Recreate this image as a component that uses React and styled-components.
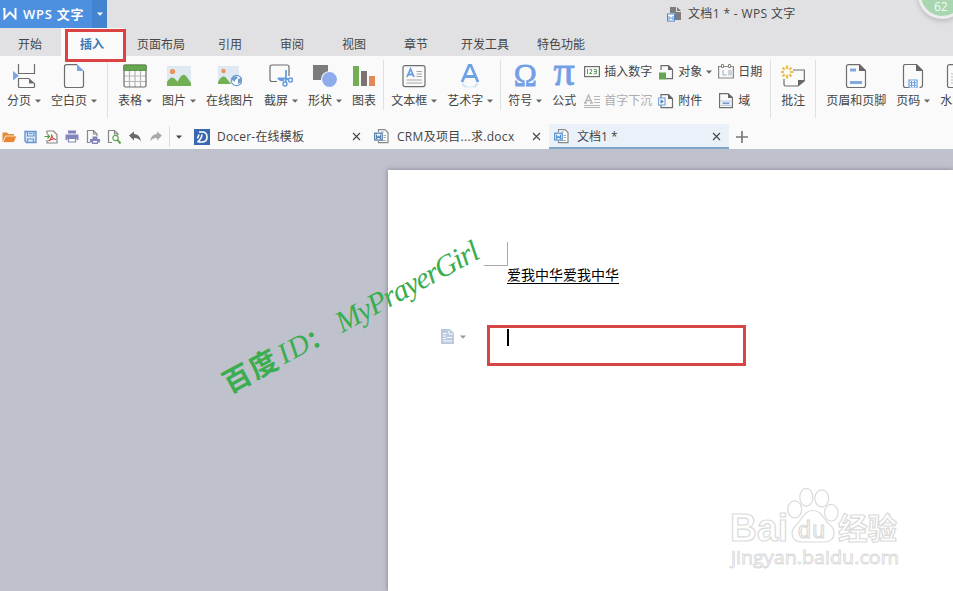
import styled, { createGlobalStyle } from "styled-components";

const GlobalStyle = createGlobalStyle`
  body {
    margin: 0;
    overflow: hidden;
  }
  svg {
    display: block;
    flex: none;
  }
`;

const Window = styled.div`
  position: relative;
  width: 953px;
  height: 591px;
  overflow: hidden;
  display: flex;
  flex-direction: column;
  background: #bfc2cc;
  font-family: "Open Sans", "Noto Sans CJK SC", sans-serif;
  font-size: 12px;
  line-height: 16px;
  color: #454545;
  white-space: nowrap;
`;

const TitleBar = styled.div`
  height: 28px;
  flex: none;
  display: flex;
  background: #e1e1e3;
`;

const Brand = styled.div`
  width: 92px;
  display: flex;
  align-items: center;
  gap: 6px;
  padding-left: 3px;
  box-sizing: border-box;
  background: #4c90df;
  color: #fff;
  font-size: 13px;
  font-weight: 600;
  letter-spacing: 0.75px;
`;

const BrandMenu = styled.div`
  width: 15px;
  display: flex;
  align-items: center;
  justify-content: center;
  background: #4384d0;
`;

const WindowTitle = styled.div`
  display: flex;
  align-items: center;
  gap: 6px;
  margin-left: 560px;
  letter-spacing: 0.35px;
`;

const Tabs = styled.div`
  height: 28px;
  flex: none;
  display: flex;
  background: #e1e1e3;
  padding-right: 20px;
`;

const Tab = styled.div`
  width: ${(props) => (props.$wide ? 76 : 62)}px;
  display: flex;
  align-items: center;
  justify-content: center;
  padding-top: 6px;
  box-sizing: border-box;
  background: ${(props) => (props.$active ? "#fafafa" : "transparent")};
  color: ${(props) => (props.$active ? "#4079b5" : "#454545")};
  font-weight: ${(props) => (props.$active ? 700 : 400)};

  &:first-child {
    margin-left: -1px;
  }
`;

const Ribbon = styled.div`
  height: 68px;
  flex: none;
  display: flex;
  background: #fafafa;
  padding-left: 2px;
  box-sizing: border-box;
`;

const ToolButton = styled.div`
  flex: none;
  display: flex;
  flex-direction: column;
  align-items: center;
  gap: 5px;
  padding: 8px 5px 0;
`;

const ToolLabel = styled.div`
  display: flex;
  align-items: center;
  gap: 4px;
`;

const Separator = styled.div`
  flex: none;
  width: 1px;
  height: ${(props) => (props.$tall ? 58 : 50)}px;
  margin: 4px ${(props) => (props.$tall ? 5 : 2)}px 0;
  background: #dfe0e2;
`;

const SmallColumn = styled.div`
  flex: none;
  width: ${(props) => props.$width}px;
  display: flex;
  flex-direction: column;
  gap: 13px;
  padding-top: 8px;
`;

const SmallColumns = styled.div`
  flex: none;
  display: flex;
  box-sizing: border-box;
  padding-left: 3px;
  width: 184px;
`;

const SmallButton = styled.div`
  display: flex;
  align-items: center;
  gap: 4px;
  color: ${(props) => (props.$disabled ? "#acacac" : "#454545")};
`;

const DocBar = styled.div`
  height: 25px;
  flex: none;
  display: flex;
  background: #fafafa;
`;

const QuickTools = styled.div`
  width: 189px;
  flex: none;
  display: flex;
  align-items: center;
  gap: 5px;
  padding-left: 1px;
  box-sizing: border-box;
`;

const QuickDivider = styled.div`
  width: 1px;
  height: 21px;
  margin-right: 1px;
  background: #dddde0;
`;

const DocTab = styled.div`
  width: 180px;
  flex: none;
  display: flex;
  align-items: center;
  box-sizing: border-box;
  padding: 2px 8px 0 5px;
  background: ${(props) => (props.$active ? "#eaf1f9" : "transparent")};
  border-bottom: 2px solid ${(props) => (props.$active ? "#7fa6ca" : "transparent")};

  svg:last-child {
    margin-left: auto;
  }
`;

const DocName = styled.span`
  margin-left: ${(props) => props.$gap || 8}px;
  letter-spacing: ${(props) => props.$spacing || 0}px;
`;

const NewTab = styled.div`
  display: flex;
  align-items: center;
  padding-left: 7px;
`;

const Workspace = styled.div`
  flex: 1;
  display: flex;
  padding: 21px 0 0 388px;
`;

const Paper = styled.div`
  flex: 1;
  background: #fff;
  box-shadow: 0 0 5px rgba(70, 70, 90, 0.55);
  padding: 72px 0 0 52px;
`;

const MarginCorner = styled.div`
  width: 23px;
  height: 23px;
  margin-left: 44px;
  border-right: 1px solid #a9a9a9;
  border-bottom: 1px solid #a9a9a9;
`;

const Paragraph = styled.div`
  width: 112px;
  height: 17px;
  margin-left: 67px;
  border-bottom: 1px solid #000;
  font-family: "Noto Sans CJK SC", sans-serif;
  font-size: 14px;
  line-height: 16px;
  color: #000;
`;

const CaretLine = styled.div`
  display: flex;
  align-items: flex-start;
  margin-top: 41px;
`;

const PasteOptions = styled.div`
  display: flex;
  align-items: center;
  gap: 6px;
  padding: 4px 0 0 1px;
`;

const HighlightFrame = styled.div`
  width: 253px;
  height: 35px;
  margin-left: 21px;
  border: 3px solid #d54645;
`;

const TextCursor = styled.div`
  width: 2px;
  height: 17px;
  margin: 1px 0 0 17px;
  background: #000;
`;

const TabHighlight = styled.div`
  position: absolute;
  left: 65px;
  top: 29px;
  width: 55px;
  height: 27px;
  border: 3px solid #dc4242;
`;

const ScoreBubble = styled.div`
  position: absolute;
  left: 918px;
  top: -29px;
  width: 42px;
  height: 42px;
  border: 3px solid #ececee;
  border-radius: 50%;
  background: #a8d6b1;
  box-shadow: 0 2px 5px rgba(0, 0, 0, 0.18);
  color: #f3fbf4;
  font-size: 12px;
  line-height: 66px;
  text-indent: 13px;
`;

const Greek = styled.span`
  height: 24px;
  font-family: "Liberation Serif", serif;
  font-size: ${(props) => props.$size}px;
  line-height: ${(props) => props.$line}px;
  color: #749fe6;
  -webkit-text-stroke: 0.8px #749fe6;
`;

const Overlay = styled.svg`
  position: absolute;
  left: 0;
  top: 0;
  pointer-events: none;
`;

const Caret = ({ color = "#666" }) => (
  <svg width="6" height="4" viewBox="0 0 6 4">
    <path d="M0 .5h6L3 3.8z" fill={color} />
  </svg>
);

const Close = () => (
  <svg width="9" height="9" viewBox="0 0 9 9">
    <path d="M1 1l7 7M8 1L1 8" stroke="#444" strokeWidth="1.1" />
  </svg>
);

const Icon = ({ size = 24, children }) => (
  <svg
    width={size}
    height={size}
    viewBox={`0 0 ${size} ${size}`}
    fill="none"
    stroke="#6d6d6d"
    strokeWidth="1.2"
  >
    {children}
  </svg>
);

const PageBreakIcon = () => (
  <Icon>
    <path d="M6.500 0v9.500h16V0" />
    <path d="M17 14.500H6.500v8q0 1 1 1h14q1 0 1-1V19" />
    <path d="M17 14l6 5.500h-6z" fill="#6d6d6d" stroke="none" />
    <path d="M1 7l6 4.800-6 4.800z" fill="#7da5de" stroke="none" />
  </Icon>
);

const BlankPageIcon = () => (
  <Icon>
    <path d="M15 .6H4.500q-2 0-2 2v19q0 2 2 2h15q2 0 2-2V7" />
    <path d="M15 0l7 7h-7z" fill="#7da5e6" stroke="none" />
  </Icon>
);

const TableIcon = () => (
  <Icon>
    <path d="M1 12h22M1 17.500h22M6.500 6v17M12 6v17M17.500 6v17" stroke="#b5b5b5" />
    <rect x="1" y="1" width="22" height="22" rx="1.500" />
    <path d="M.8 1h22.400v5.500H.8z" fill="#65a650" stroke="#55883e" strokeWidth=".8" />
  </Icon>
);

const PictureIcon = () => (
  <Icon>
    <rect y="2" width="24" height="20" fill="#dfe9f1" stroke="none" />
    <circle cx="5.500" cy="7.500" r="2.600" fill="#ed925b" stroke="none" />
    <path d="M0 22v-4q5-8 9-2l1.500 2q5-11 9-5.500L24 19v3z" fill="#72b053" stroke="none" />
  </Icon>
);

const OnlinePictureIcon = () => (
  <Icon>
    <rect y="2" width="21" height="18" fill="#dfe9f1" stroke="none" />
    <circle cx="5.500" cy="7" r="2.200" fill="#ed925b" stroke="none" />
    <path d="M0 20v-2q5-9 9-3l4 5z" fill="#72b053" stroke="none" />
    <circle cx="18.500" cy="16.500" r="5.200" fill="#fff" stroke="#6c9ccd" />
    <path d="M14 13l4-1 2 2-3 2v2l-3-2zM20 15l3-1v4l-3 2z" fill="#6c9ccd" stroke="none" />
  </Icon>
);

const ScreenshotIcon = () => (
  <Icon>
    <path d="M8 17.500H3q-2 0-2-2V3q0-2 2-2h15q2 0 2 2v9" />
    <path d="M17 6v9l-.5 3M9 14.500h6.500l4 .5" stroke="#699de0" strokeWidth="1.800" />
    <path d="M8 14h7v3.500q-5 0-7-3.500z" fill="#699de0" stroke="none" />
    <circle cx="16" cy="20" r="2" stroke="#699de0" strokeWidth="1.500" />
    <circle cx="21.500" cy="16" r="2" stroke="#699de0" strokeWidth="1.500" />
  </Icon>
);

const ShapesIcon = () => (
  <Icon>
    <rect y="1" width="15" height="15" fill="#7c7c7c" stroke="none" />
    <circle cx="16.500" cy="15.500" r="8" fill="#8eaceb" stroke="#fafafa" />
  </Icon>
);

const ChartIcon = () => (
  <Icon>
    <rect x="1" y="2" width="6" height="20" fill="#72b053" stroke="none" />
    <rect x="9" y="7" width="6" height="15" fill="#7d7373" stroke="none" />
    <rect x="17" y="12" width="6" height="10" fill="#e18a57" stroke="none" />
  </Icon>
);

const TextBoxIcon = () => (
  <Icon>
    <rect x="1" y="1.600" width="22" height="21" rx="2" />
    <path d="M5 13L8.500 5 12 13M6 10.500h5" stroke="#6d9de0" strokeWidth="1.800" />
    <path d="M14.500 7.500H20M14.500 10H20M14.500 12.500H20M4.500 16H20M4.500 19H20" stroke="#a5a5a5" strokeWidth="1" />
  </Icon>
);

const WordArtIcon = () => (
  <Icon>
    <path d="M4 18L11.300 1h1.400L20 18M6.500 12.500h11" stroke="#6ea2e4" strokeWidth="2.800" />
    <path d="M4 19.500q2 3 5 3.500M20 19.500q-2 3-5 3.500" stroke="#d3e3f6" strokeWidth="2" />
    <path d="M8 23h8" stroke="#e6eff9" strokeWidth="1.500" />
  </Icon>
);

const CommentIcon = () => (
  <Icon>
    <path d="M12 6h11.300v11L17 22H4.500q-1.500 0-1.500-1.500V15" />
    <path d="M17 16h6.500L17 22.500z" fill="#666" stroke="none" />
    <path
      d="M6 1.500v3.500M6 11v3.500M-.5 8H3M9 8h3.500M1.500 3.500l2.200 2.200M8.300 10.300l2.200 2.200M10.500 3.500L8.300 5.700M3.700 10.300l-2.200 2.200"
      stroke="#efbd47"
      strokeWidth="2.200"
    />
  </Icon>
);

const HeaderFooterIcon = () => (
  <Icon>
    <path d="M15.500 .6H4.500q-2 0-2 2v19q0 2 2 2h15q2 0 2-2V6.500z" />
    <path d="M15 0l7 7h-7z" fill="#666" stroke="none" />
    <path d="M6 4.500h6v3H6zM6 17h12v3H6z" fill="#82aadf" stroke="none" />
  </Icon>
);

const PageNumberIcon = () => (
  <Icon>
    <path d="M8 23.500H4.500q-2 0-2-2v-19q0-2 2-2h11l6 6v15q0 2-3 2" />
    <path d="M15 0l7 7h-7z" fill="#666" stroke="none" />
    <path d="M8 16h8v8H8z" fill="#fff" stroke="#699de0" />
    <path d="M10.500 17v6M13.500 17v6M9 18.700h6M9 21.300h6" stroke="#699de0" strokeWidth="1" />
  </Icon>
);

const WatermarkIcon = () => (
  <Icon>
    <path d="M15.500 .6H4.500q-2 0-2 2v19q0 2 2 2h15q2 0 2-2V6.500z" />
    <path d="M6 10h8M6 13h8M6 16h8M6 19h8" stroke="#bbb" strokeWidth="1" />
  </Icon>
);

const NumberIcon = () => (
  <Icon size={16}>
    <rect x=".6" y="2.600" width="14.800" height="10" />
    <path
      d="M3.500 5v5M5.500 5.500h2V7.500l-2 2H8M9.800 5.500h2.500v4.200H9.800M10 7.500h2.500"
      stroke="#58a15a"
      strokeWidth="1"
    />
  </Icon>
);

const DropCapIcon = () => (
  <Icon size={16}>
    <path d="M1 10L4.500 2 8 10M2.500 7.500h4M0 10h3M6 10h3" stroke="#b5b5b5" strokeWidth="1.300" />
    <path d="M10 3.500h6M10 6.500h6M10 9.500h6M0 12.500h16M0 14.500h16" stroke="#b5b5b5" strokeWidth="1" />
  </Icon>
);

const FileBase = () => (
  <>
    <path d="M3 6V1.600h7.500l4 4v9H8" />
    <path d="M10 1l5 5h-5z" fill="#666" stroke="none" />
  </>
);

const ObjectIcon = () => (
  <Icon size={16}>
    <FileBase />
    <rect x="1" y="8.500" width="7" height="7" fill="#65a650" stroke="none" />
  </Icon>
);

const AttachmentIcon = () => (
  <Icon size={16}>
    <FileBase />
    <path d="M3 12v2.600h6" />
    <rect x=".5" y="5" width="6.500" height="7" fill="#fff" stroke="#7ba6d8" />
    <path d="M2.500 6.200L6 8.500l-3.500 2.300z" fill="#4c82c8" stroke="none" />
  </Icon>
);

const DateIcon = () => (
  <Icon size={16}>
    <path d="M3 2.500H.6V14h14.800V2.500H13M6 2.500h4" stroke="#888" />
    <path d="M3.500 .5h2v3h-2zM10.500 .5h2v3h-2z" stroke="#888" strokeWidth="1" />
    <path d="M5 6v5h3.500M11 6v5.500M13 6v5.500" stroke="#9aaac0" strokeWidth="1" />
  </Icon>
);

const FieldIcon = () => (
  <Icon size={16}>
    <path d="M10 .6H1.600v14h12.800v-10z" />
    <path d="M10 0l5 5h-5z" fill="#666" stroke="none" />
    <path d="M3.500 8h9M3.500 12.500h9" stroke="#6f9bd2" strokeDasharray="1 1" />
    <path d="M4.500 10.300h7" stroke="#6f9bd2" strokeWidth="1.800" />
  </Icon>
);

const WpsLogo = () => (
  <svg width="14" height="12" viewBox="0 0 14 12" fill="none" stroke="#fff" strokeWidth="1.900">
    <path d="M0 1h1.500v9.300L7 4.500l5.500 5.800V0" />
  </svg>
);

const TitleDocIcon = () => (
  <svg width="15" height="15" viewBox="0 0 15 15">
    <path d="M3 0h6v5h5v8H8V6H3z" fill="#7c7c7c" />
    <path d="M10 0l4 4h-4z" fill="#777" />
    <rect x=".5" y="7" width="7" height="7" fill="#fff" stroke="#4c88c8" />
    <path d="M2 9v3.500l2-2 2 2V9" fill="none" stroke="#4c88c8" />
  </svg>
);

const DocFileIcon = ({ color }) => (
  <svg width="15" height="15" viewBox="0 0 15 15" fill="none" stroke="#888">
    <path d="M4.500 3V.6h6.500l3 3v10H4.500V12" fill="#fff" strokeWidth="1.200" />
    <path d="M9.500 6.500H12M9.500 8.500H12M6.500 11.500H12M7 3h3" stroke="#aaa" />
    <rect x=".7" y="4.200" width="7.500" height="6.800" fill="#fff" stroke={color} strokeWidth="1.300" />
    <path d="M2.600 5.500v3.800l1.900-2 1.900 2V5.500" stroke={color} strokeWidth="1.200" />
  </svg>
);

const DocerIcon = () => (
  <svg width="16" height="16" viewBox="0 0 16 16">
    <rect width="16" height="16" fill="#3868ae" />
    <path
      d="M5 3h3q5 0 5 5t-5 5H3.500M8 5.500q-.5 4.500-4.500 7.500M5 5.500l-1.500 4"
      fill="none"
      stroke="#fff"
      strokeWidth="1.600"
    />
  </svg>
);

const OpenIcon = () => (
  <Icon size={16}>
    <path d="M1.500 13V3.500H6L7.500 5H13v2.500" fill="#e9882e" stroke="none" />
    <path d="M1.800 13.500L4.500 7h11.300l-2.800 6.500z" fill="#e9882e" stroke="#fafafa" strokeWidth=".8" />
  </Icon>
);

const SaveIcon = () => (
  <Icon size={16}>
    <path d="M3 2.500h11v11H4.500L3 12z" fill="#d8e8f8" stroke="#6894cf" strokeWidth="1.400" />
    <path d="M5.500 2.500V7H12V2.500M5.500 13.500V10h6v3.500M7 4.500h3.500" stroke="#6894cf" />
  </Icon>
);

const PdfIcon = () => (
  <Icon size={16}>
    <path d="M4 5V2h6.500L14 5.500V14H4v-3" stroke="#888" />
    <path d="M5.500 12q4-3 3-6.500Q9 10 13 10.500q-3-1.500-7.500 1.500" stroke="#d24a4b" />
    <path d="M1.500 7.500h5M4.500 5.500l2 2-2 2" stroke="#4e9e51" />
  </Icon>
);

const PrintIcon = () => (
  <Icon size={16}>
    <path d="M4 1.500h8v3H4zM1.500 5.500h13V11h-2V9h-9v2h-2z" fill="#8185bb" stroke="none" />
    <path d="M4.500 9.500h7V13h-7z" fill="#fff" stroke="#8185bb" />
  </Icon>
);

const PrintPageIcon = () => (
  <Icon size={16}>
    <path d="M5 13.500H2.500v-12h6l3.500 3.500V7" stroke="#888" />
    <path d="M8.500 1.500V5H12" stroke="#888" />
    <path d="M7.500 7.500h5V10H15v3.500h-2V15H7v-1.500H5V10h2.500z" fill="#8185bb" stroke="none" />
    <path d="M8 12h4v1.500H8z" fill="#fff" stroke="none" />
  </Icon>
);

const PreviewIcon = () => (
  <Icon size={16}>
    <path d="M6 13.500H2.500v-12h6l3.500 3.500V6" stroke="#888" />
    <path d="M8.500 1.500V5H12" stroke="#888" />
    <circle cx="9.500" cy="9" r="2.700" stroke="#65a857" />
    <path d="M11.500 11l3 3.500" stroke="#65a857" strokeWidth="2" />
  </Icon>
);

const UndoIcon = () => (
  <Icon size={16}>
    <path d="M2 6.500l5-4V5q6 0 7 7.500-2.500-4-7-3.500v2.500z" fill="#696969" stroke="none" />
  </Icon>
);

const RedoIcon = () => (
  <Icon size={16}>
    <path d="M14 6.500l-5-4V5q-6 0-7 7.500 2.500-4 7-3.500v2.500z" fill="#aaa" stroke="none" />
  </Icon>
);

const PasteIcon = () => (
  <svg width="13" height="15" viewBox="0 0 13 15">
    <path d="M0 0h9l4 4v11H0z" fill="#b9cae0" />
    <path d="M2 4.500h4M2 7h3M6 8.500h5M2 9.500h3M2 12h9M8 1.500V5h4" fill="none" stroke="#fff" />
  </svg>
);

const Tool = ({ label, icon, menu }) => (
  <ToolButton>
    {icon}
    <ToolLabel>
      {label}
      {menu && <Caret />}
    </ToolLabel>
  </ToolButton>
);

const tabs = ["开始", "插入", "页面布局", "引用", "审阅", "视图", "章节", "开发工具", "特色功能"];

// the uploader's rotated signature
const Signature = () => (
  <Overlay width="953" height="591" viewBox="0 0 953 591">
    <g transform="translate(230 395) rotate(-28.5)" fill="#3aad4f">
      <text x="0" y="-1" fontFamily="Noto Sans CJK SC, sans-serif" fontWeight="700" fontSize="28" textLength="58">
        百度
      </text>
      <text x="62" y="-1" fontFamily="Liberation Serif, serif" fontStyle="italic" fontSize="29" textLength="32">
        ID
      </text>
      <text x="94" y="0" fontFamily="Noto Sans CJK SC, sans-serif" fontWeight="700" fontSize="25">
        ：
      </text>
      <text x="128" y="-1" fontFamily="Liberation Serif, serif" fontStyle="italic" fontSize="30" textLength="159">
        MyPrayerGirl
      </text>
    </g>
  </Overlay>
);

const BaiduMark = () => (
  <Overlay width="953" height="591" viewBox="0 0 953 591">
    <g fill="#fff" stroke="#dadada" strokeWidth="1.200">
      <text
        x="730"
        y="541"
        fontFamily="Liberation Sans, sans-serif"
        fontWeight="700"
        fontSize="38"
        textLength="58"
        lengthAdjust="spacingAndGlyphs"
      >
        Bai
      </text>
      <ellipse cx="794.700" cy="509.300" rx="7" ry="8.500" />
      <ellipse cx="806.300" cy="497.300" rx="6.500" ry="9" />
      <ellipse cx="821.800" cy="498.300" rx="7" ry="8.500" />
      <ellipse cx="831.300" cy="512.700" rx="6.800" ry="8.300" />
      <path d="M813 510.500c8 0 10 7 14 11.500 4 4 7.500 6 7 12-.5 6-5 8-10 8h-22c-6 0-10-3-10-9 0-5 4-7 7-11 4-5 6-11.500 14-11.500z" />
      <text x="798" y="537.500" fontFamily="Liberation Sans, sans-serif" fontSize="23" textLength="27">
        du
      </text>
      <text x="838" y="539" fontFamily="Noto Sans CJK SC, sans-serif" fontWeight="700" fontSize="29.500" textLength="59">
        经验
      </text>
      <text
        x="731"
        y="564"
        fontFamily="Open Sans, sans-serif"
        fontSize="19"
        strokeWidth=".9"
        textLength="168"
        lengthAdjust="spacingAndGlyphs"
      >
        jingyan.baidu.com
      </text>
    </g>
  </Overlay>
);

const App = () => {
  return (
    <Window>
      <GlobalStyle />
      <TitleBar>
        <Brand>
          <WpsLogo />
          WPS 文字
        </Brand>
        <BrandMenu>
          <Caret color="#fff" />
        </BrandMenu>
        <WindowTitle>
          <TitleDocIcon />
          文档1 * - WPS 文字
        </WindowTitle>
      </TitleBar>

      <Tabs>
        {tabs.map((tab) => (
          <Tab key={tab} $wide={tab.length > 2} $active={tab === "插入"}>
            {tab}
          </Tab>
        ))}
      </Tabs>

      <Ribbon>
        <Tool label="分页" icon={<PageBreakIcon />} menu />
        <Tool label="空白页" icon={<BlankPageIcon />} menu />
        <Separator $tall />
        <Tool label="表格" icon={<TableIcon />} menu />
        <Tool label="图片" icon={<PictureIcon />} menu />
        <Tool label="在线图片" icon={<OnlinePictureIcon />} />
        <Tool label="截屏" icon={<ScreenshotIcon />} menu />
        <Tool label="形状" icon={<ShapesIcon />} menu />
        <Tool label="图表" icon={<ChartIcon />} />
        <Separator />
        <Tool label="文本框" icon={<TextBoxIcon />} menu />
        <Tool label="艺术字" icon={<WordArtIcon />} menu />
        <Separator />
        <Tool label="符号" icon={<Greek $size={31} $line={24}>Ω</Greek>} menu />
        <Tool label="公式" icon={<Greek $size={42} $line={15}>π</Greek>} />
        <SmallColumns>
          <SmallColumn $width={74}>
            <SmallButton>
              <NumberIcon />
              插入数字
            </SmallButton>
            <SmallButton $disabled>
              <DropCapIcon />
              首字下沉
            </SmallButton>
          </SmallColumn>
          <SmallColumn $width={60}>
            <SmallButton>
              <ObjectIcon />
              对象
              <Caret />
            </SmallButton>
            <SmallButton>
              <AttachmentIcon />
              附件
            </SmallButton>
          </SmallColumn>
          <SmallColumn $width={46}>
            <SmallButton>
              <DateIcon />
              日期
            </SmallButton>
            <SmallButton>
              <FieldIcon />
              域
            </SmallButton>
          </SmallColumn>
        </SmallColumns>
        <Separator $tall />
        <Tool label="批注" icon={<CommentIcon />} />
        <Separator $tall />
        <Tool label="页眉和页脚" icon={<HeaderFooterIcon />} />
        <Tool label="页码" icon={<PageNumberIcon />} menu />
        <Tool label="水印" icon={<WatermarkIcon />} menu />
      </Ribbon>

      <DocBar>
        <QuickTools>
          <OpenIcon />
          <SaveIcon />
          <PdfIcon />
          <PrintIcon />
          <PrintPageIcon />
          <PreviewIcon />
          <UndoIcon />
          <RedoIcon />
          <QuickDivider />
          <Caret color="#444" />
        </QuickTools>
        <DocTab>
          <DocerIcon />
          <DocName $gap={7} $spacing={0.2}>
            Docer-在线模板
          </DocName>
          <Close />
        </DocTab>
        <DocTab>
          <DocFileIcon color="#557fae" />
          <DocName $spacing={0.3}>CRM及项目...求.docx</DocName>
          <Close />
        </DocTab>
        <DocTab $active>
          <DocFileIcon color="#5b94cf" />
          <DocName>文档1 *</DocName>
          <Close />
        </DocTab>
        <NewTab>
          <svg width="12" height="12" viewBox="0 0 12 12">
            <path d="M6 0v12M0 6h12" stroke="#777" strokeWidth="1.700" />
          </svg>
        </NewTab>
      </DocBar>

      <Workspace>
        <Paper>
          <MarginCorner />
          <Paragraph>爱我中华爱我中华</Paragraph>
          <CaretLine>
            <PasteOptions>
              <PasteIcon />
              <Caret color="#999" />
            </PasteOptions>
            <HighlightFrame>
              <TextCursor />
            </HighlightFrame>
          </CaretLine>
        </Paper>
      </Workspace>

      <TabHighlight />
      <ScoreBubble>62</ScoreBubble>
      <Signature />
      <BaiduMark />
    </Window>
  );
};

export default App;
